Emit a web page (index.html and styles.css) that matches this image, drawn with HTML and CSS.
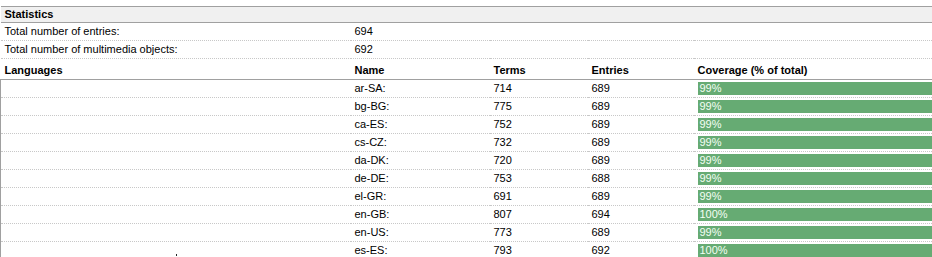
FILE: index.html
```html
<!DOCTYPE html>
<html>
<head>
<meta charset="utf-8">
<link rel="stylesheet" href="styles.css">
</head>
<body>
<div class="page">
<table class="stats">
  <colgroup>
    <col class="c1"><col class="c2"><col class="c3"><col class="c4"><col class="c5">
  </colgroup>
  <tr class="head"><th colspan="5">Statistics</th></tr>
  <tr class="row"><td>Total number of entries:</td><td colspan="4">694</td></tr>
  <tr class="row"><td>Total number of multimedia objects:</td><td colspan="4">692</td></tr>
  <tr class="subhead"><th>Languages</th><th>Name</th><th>Terms</th><th>Entries</th><th>Coverage (% of total)</th></tr>
  <tr class="lang"><td class="lb"></td><td>ar-SA:</td><td>714</td><td>689</td><td class="cov"><div class="bar">99%</div></td></tr>
  <tr class="lang"><td class="lb"></td><td>bg-BG:</td><td>775</td><td>689</td><td class="cov"><div class="bar">99%</div></td></tr>
  <tr class="lang"><td class="lb"></td><td>ca-ES:</td><td>752</td><td>689</td><td class="cov"><div class="bar">99%</div></td></tr>
  <tr class="lang"><td class="lb"></td><td>cs-CZ:</td><td>732</td><td>689</td><td class="cov"><div class="bar">99%</div></td></tr>
  <tr class="lang"><td class="lb"></td><td>da-DK:</td><td>720</td><td>689</td><td class="cov"><div class="bar">99%</div></td></tr>
  <tr class="lang"><td class="lb"></td><td>de-DE:</td><td>753</td><td>688</td><td class="cov"><div class="bar">99%</div></td></tr>
  <tr class="lang"><td class="lb"></td><td>el-GR:</td><td>691</td><td>689</td><td class="cov"><div class="bar">99%</div></td></tr>
  <tr class="lang"><td class="lb"></td><td>en-GB:</td><td>807</td><td>694</td><td class="cov"><div class="bar">100%</div></td></tr>
  <tr class="lang"><td class="lb"></td><td>en-US:</td><td>773</td><td>689</td><td class="cov"><div class="bar">99%</div></td></tr>
  <tr class="lang"><td class="lb"></td><td>es-ES:</td><td>793</td><td>692</td><td class="cov"><div class="bar">100%</div></td></tr>
</table>
<span class="dot"></span>
</div>
</body>
</html>
```
FILE: styles.css
```css
html, body {
  margin: 0;
  padding: 0;
  background: #ffffff;
}
body {
  font-family: "Liberation Sans", Arial, sans-serif;
  font-size: 11px;
  color: #000;
}
.page {
  position: relative;
  padding-top: 6px;
  width: 932px;
  overflow: hidden;
  height: 251px;
}
.stats {
  border-collapse: collapse;
  table-layout: fixed;
  width: 932px;
}
.c1 { width: 350px; }
.c2 { width: 139px; }
.c3 { width: 98px; }
.c4 { width: 106px; }
.stats th, .stats td {
  padding: 0 0 0 4px;
  text-align: left;
  white-space: nowrap;
  overflow: hidden;
}
.head th {
  background: #f0f0f0;
  border-top: 1px solid #a0a0a0;
  border-bottom: 1px solid #a0a0a0;
  height: 15px;
  font-weight: bold;
  line-height: 15px;
}
.row td {
  height: 17px;
  line-height: 17px;
  border-bottom: 1px dotted #c8c8c8;
}
.subhead th {
  height: 18px;
  line-height: 13px;
  vertical-align: bottom;
  padding-bottom: 2px;
  font-weight: bold;
  border-bottom: 1px solid #a0a0a0;
}
.lang td {
  height: 17px;
  line-height: 17px;
  border-bottom: 1px dotted #c8c8c8;
}
.lang td.lb {
  border-left: 1px solid #a0a0a0;
}
.lang:last-child td {
  border-bottom: none;
}
.lang td.cov {
  height: 13px;
  padding: 2px 0 2px 4px;
  line-height: 13px;
}
.bar {
  background: #66ab73;
  color: #f4fff4;
  height: 13px;
  line-height: 13px;
  padding-left: 2px;
}
.dot {
  position: absolute;
  left: 176px;
  top: 254px;
  width: 1px;
  height: 2px;
  background: #222;
}
```
